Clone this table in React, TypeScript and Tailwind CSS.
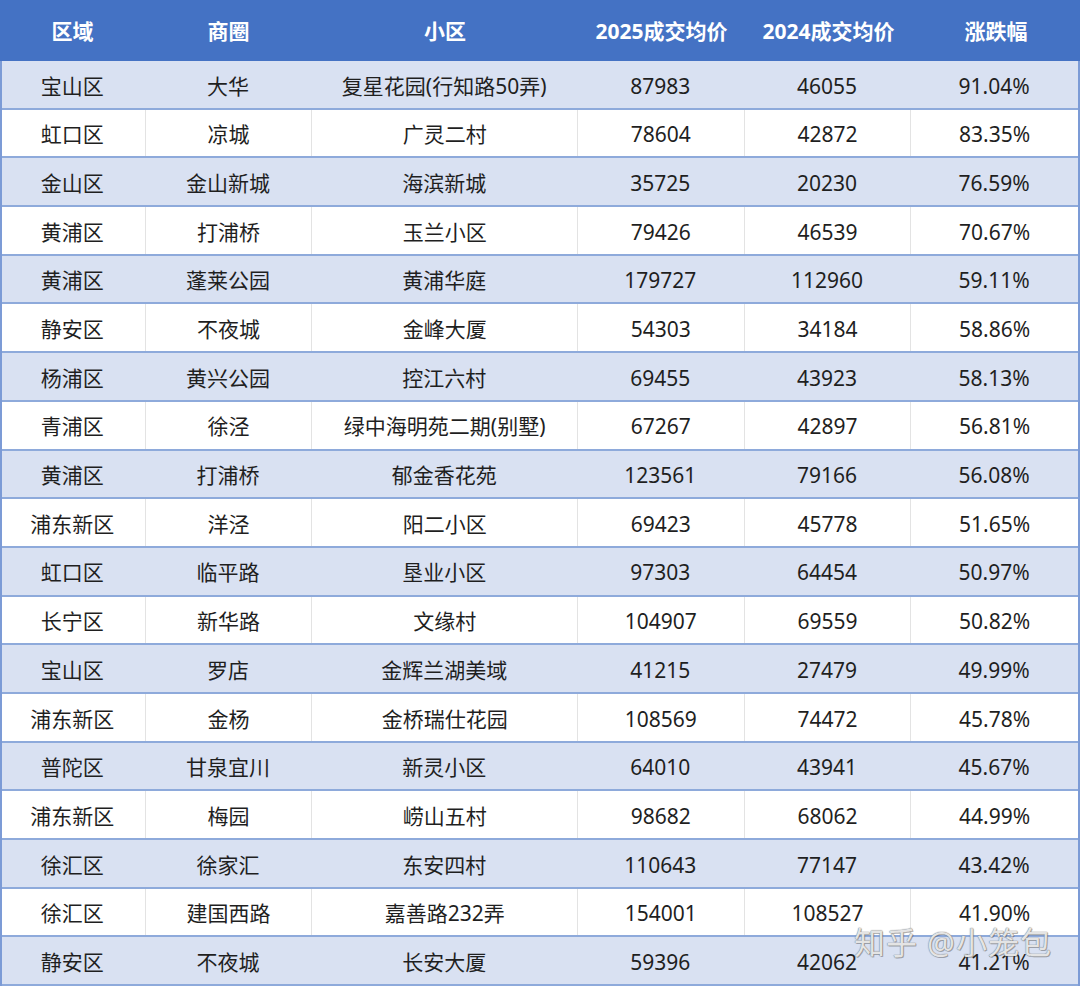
const rows: string[][] = [
  ['宝山区', '大华', '复星花园(行知路50弄)', '87983', '46055', '91.04%'],
  ['虹口区', '凉城', '广灵二村', '78604', '42872', '83.35%'],
  ['金山区', '金山新城', '海滨新城', '35725', '20230', '76.59%'],
  ['黄浦区', '打浦桥', '玉兰小区', '79426', '46539', '70.67%'],
  ['黄浦区', '蓬莱公园', '黄浦华庭', '179727', '112960', '59.11%'],
  ['静安区', '不夜城', '金峰大厦', '54303', '34184', '58.86%'],
  ['杨浦区', '黄兴公园', '控江六村', '69455', '43923', '58.13%'],
  ['青浦区', '徐泾', '绿中海明苑二期(别墅)', '67267', '42897', '56.81%'],
  ['黄浦区', '打浦桥', '郁金香花苑', '123561', '79166', '56.08%'],
  ['浦东新区', '洋泾', '阳二小区', '69423', '45778', '51.65%'],
  ['虹口区', '临平路', '垦业小区', '97303', '64454', '50.97%'],
  ['长宁区', '新华路', '文缘村', '104907', '69559', '50.82%'],
  ['宝山区', '罗店', '金辉兰湖美域', '41215', '27479', '49.99%'],
  ['浦东新区', '金杨', '金桥瑞仕花园', '108569', '74472', '45.78%'],
  ['普陀区', '甘泉宜川', '新灵小区', '64010', '43941', '45.67%'],
  ['浦东新区', '梅园', '崂山五村', '98682', '68062', '44.99%'],
  ['徐汇区', '徐家汇', '东安四村', '110643', '77147', '43.42%'],
  ['徐汇区', '建国西路', '嘉善路232弄', '154001', '108527', '41.90%'],
  ['静安区', '不夜城', '长安大厦', '59396', '42062', '41.21%'],
]

const headers = ['区域', '商圈', '小区', '2025成交均价', '2024成交均价', '涨跌幅']
const widths = ['w-[145px]', 'w-[167px]', 'w-[266px]', 'w-[167px]', 'w-[167px]', 'w-[168px]']

export default function App() {
  return (
    <div className="relative h-[987px] w-[1080px] overflow-hidden bg-white font-['Noto_Sans','Noto_Sans_CJK_SC',sans-serif]">
      {/* Header */}
      <div className="flex h-[61px] bg-[#4472c4]">
        {headers.map((h, i) => (
          <div
            key={h}
            className={`${widths[i]} flex items-center justify-center pt-[2px] text-[21px] font-bold text-white`}
          >
            {h}
          </div>
        ))}
      </div>

      {/* Body */}
      <div className="border-x-2 border-[#7c9bd6]">
        {rows.map((r, ri) => {
          const striped = ri % 2 === 0
          return (
            <div
              key={ri}
              className={`flex h-[48.7px] border-b-2 border-[#8eaadb] ${striped ? 'bg-[#d9e1f2]' : 'bg-white'}`}
            >
              {r.map((c, ci) => (
                <div
                  key={ci}
                  className={`${widths[ci]} flex items-center justify-center pt-[4px] text-[21px] text-[#1f1f1f] ${
                    ci > 0 && !striped ? 'border-l border-[#e3e3e3]' : ''
                  } ${ci === 0 ? '-ml-[2px]' : ''}`}
                >
                  {c}
                </div>
              ))}
            </div>
          )
        })}
      </div>

      {/* Watermark */}
      <div className="pointer-events-none absolute left-[854px] top-[919px] text-[31px] font-normal tracking-[1px] text-white/80 [text-shadow:0_0_1px_#777,0_0_1px_#777,1px_1px_0_rgba(0,0,0,0.25)]">
        知乎 @小笼包
      </div>
    </div>
  )
}
